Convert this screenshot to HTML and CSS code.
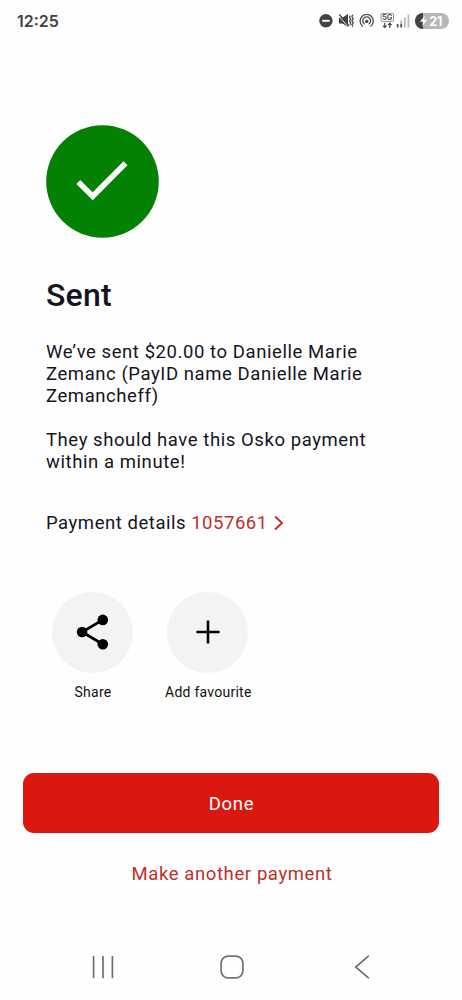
FILE: index.html
```html
<!DOCTYPE html>
<html lang="en">
<head>
<meta charset="utf-8">
<title>Payment sent</title>
<link rel="stylesheet" href="styles.css">
</head>
<body>
<div class="screen">
  <header class="status-bar">
    <span class="clock">12:25</span>
    <div class="status-icons">
      <svg class="status-glyphs" width="92" height="18" viewBox="318 12 92 18" fill="none">
        <circle cx="325.9" cy="20.8" r="6.7" fill="#434343"/>
        <path d="M322.200 20.800h7.4" stroke="#fff" stroke-width="1.9"/>
        <path d="M339 17.500h3.500l5.500-3.500v13L342.500 23.500h-3.500z" fill="#434343"/>
        <path d="M338.2 15.200l9.800 11.400" stroke="#fff" stroke-width="1"/>
        <path d="M339.2 14.400l9.800 11.600" stroke="#434343" stroke-width="1.400"/>
        <path d="M350.300 15.500l-.8 1.800 1.200 1.800-1.200 1.800 1.200 1.800-.8 2M352.800 14.800l-.9 2 1.400 2-1.400 2 1.400 2-1.400 2 1 1.800" stroke="#434343" stroke-width="1.2"/>
        <path d="M362.4 26a6.6 6.6 0 1 1 8.6 0M364.2 23.8a3.9 3.9 0 1 1 5 0" stroke="#505050" stroke-width="1.4" stroke-linecap="round"/>
        <circle cx="366.7" cy="21.4" r="1.7" fill="#434343"/>
        <rect x="381.1" y="13.4" width="12.4" height="8" rx="1" fill="#fff" stroke="#777" stroke-width=".8"/>
        <text class="network" x="387.3" y="20.400" text-anchor="middle">5G</text>
        <path d="M384.800 22.700v4.500M383 25.600l1.800 1.900 1.800-1.900M389.800 28v-4.500M388 25.100l1.800-1.900 1.800 1.900" stroke="#434343" stroke-width="1.200"/>
        <path d="M397.7 24v3.400M401.200 23.500v3.900" stroke="#555" stroke-width="1.8"/>
        <path d="M401.200 20.500v3M404.900 17.600v9.800M408.400 14.400v13" stroke="#bbb" stroke-width="1.8"/>
      </svg>
      <svg class="battery" width="34" height="16" viewBox="0 0 34 16">
        <rect width="34" height="16" rx="8" fill="#b7b7b7"/>
        <path d="M8 0a8 8 0 0 0 0 16z" fill="#434343"/>
        <path d="M9.7 2.8L5 8.8h3L7.3 13l5-6.2H9.1z" fill="#fff"/>
        <text class="battery-level" x="20.8" y="12.500" text-anchor="middle">21</text>
      </svg>
    </div>
  </header>

  <main class="content">
    <svg class="success" width="113" height="113" viewBox="0 0 113 113">
      <circle cx="56.5" cy="56.5" r="56.3" fill="#028102"/>
      <path d="M32.3 57L46.700 71.300 79.500 38.200" fill="none" stroke="#fff" stroke-width="5.5"/>
    </svg>
    <h1 class="title">Sent</h1>
    <p class="message">We’ve sent $20.00 to Danielle Marie<br>Zemanc (PayID name Danielle Marie<br>Zemancheff)</p>
    <p class="message">They should have this Osko payment<br>within a minute!</p>
    <div class="details">
      <span>Payment details</span>
      <a class="reference">1057661</a>
      <svg class="chevron" width="10" height="16" viewBox="0 0 10 16" fill="none"><path d="M1.1 1.5L8 8l-6.900 6.500" stroke="#bf2f2a" stroke-width="1.9"/></svg>
    </div>
    <div class="actions">
      <div class="action share">
        <span class="action-circle">
          <svg width="34" height="38" viewBox="0 0 34 38"><path d="M26.800 6.900L6.100 19l20.700 12.200" fill="none" stroke="#000" stroke-width="2.800"/><circle cx="26.800" cy="6.900" r="5.300"/><circle cx="6.100" cy="19" r="5.300"/><circle cx="26.800" cy="31.200" r="5.300"/></svg>
        </span>
        <span class="action-label">Share</span>
      </div>
      <div class="action favourite">
        <span class="action-circle">
          <svg width="24" height="24" viewBox="0 0 24 24"><path d="M.4 12h23.200M12 .4v23.200" stroke="#000" stroke-width="2.600"/></svg>
        </span>
        <span class="action-label">Add favourite</span>
      </div>
    </div>
  </main>

  <div class="buttons">
    <button class="done">Done</button>
    <a class="another">Make another payment</a>
  </div>

  <nav class="nav-bar">
    <svg width="22" height="24" viewBox="0 0 22 24"><path d="M1.600 1.500v21M11 1.500v21M20.400 1.500v21" stroke="#707070" stroke-width="1.700" stroke-linecap="round"/></svg>
    <svg class="home" width="24" height="24" viewBox="0 0 24 24"><rect x="1.100" y="1.100" width="21.800" height="21.800" rx="7.200" fill="none" stroke="#707070" stroke-width="1.700"/></svg>
    <svg width="16" height="24" viewBox="0 0 16 24"><path d="M14.400 1.200L1.700 12l12.700 10.800" fill="none" stroke="#707070" stroke-width="1.700" stroke-linecap="round"/></svg>
  </nav>
</div>
</body>
</html>
```
FILE: styles.css
```css
* {
  box-sizing: border-box;
}

body {
  margin: 0;
  background: #fff;
  font-family: Roboto, "Liberation Sans", sans-serif;
  color: #14141f;
}

svg {
  display: block;
  flex: none;
}

.screen {
  display: flex;
  flex-direction: column;
  width: 462px;
  height: 1000px;
  overflow: hidden;
  background: #fefefe;
}

.status-bar {
  display: flex;
  justify-content: space-between;
  align-items: center;
  height: 41px;
  padding: 0 13px 0 17px;
}

.clock {
  font: 600 16px/20px Inter, sans-serif;
  color: #434343;
}

.status-icons {
  display: flex;
  align-items: center;
  gap: 5px;
}

.network {
  font: 700 7.500px Inter, sans-serif;
  fill: #555;
}

.battery-level {
  font: 700 12.500px Inter, sans-serif;
  fill: #fff;
}

.content {
  display: flex;
  flex-direction: column;
  align-items: flex-start;
  padding: 84px 46px 0;
}

.title {
  margin: 38px 0 28px;
  font-size: 32px;
  line-height: 38px;
  font-weight: 500;
  letter-spacing: 0.200px;
}

.message {
  margin: 0 0 22.400px;
  font-size: 18.500px;
  line-height: 21.800px;
  letter-spacing: 0.570px;
  white-space: nowrap;
}

.details {
  display: flex;
  align-items: center;
  height: 22px;
  margin-top: 15.800px;
  font-size: 18.500px;
  letter-spacing: 0.540px;
}

.reference {
  margin: 0 6px 0 5px;
  color: #bf2f2a;
}

.actions {
  display: flex;
  margin-top: 58px;
}

.action {
  display: flex;
  flex-direction: column;
  align-items: center;
  gap: 11px;
}

.share {
  margin-left: 6px;
}

.favourite {
  margin-left: 31px;
}

.action-circle {
  display: flex;
  align-items: center;
  justify-content: center;
  width: 81px;
  height: 81px;
  border-radius: 50%;
  background: #f2f3f5;
}

.action-label {
  font-size: 14px;
  line-height: 17px;
  letter-spacing: 0.250px;
  padding-left: 1px;
  color: #111;
  white-space: nowrap;
}

.buttons {
  display: flex;
  flex-direction: column;
  align-items: center;
  margin-top: 72px;
  padding: 0 23px;
}

.done {
  width: 416px;
  height: 60px;
  padding: 2px 0 0 1px;
  border: 0;
  border-radius: 11px;
  background: #da1810;
  color: #fff;
  font: 400 18.500px/22px Roboto, sans-serif;
  letter-spacing: 0.700px;
}

.another {
  margin: 30px 0 0 2px;
  font-size: 18.500px;
  line-height: 22px;
  letter-spacing: 0.600px;
  color: #bf2f2a;
}

.nav-bar {
  display: flex;
  justify-content: space-between;
  margin-top: 70px;
  padding: 0 92px;
}

.home {
  margin-right: 5px;
}
```
